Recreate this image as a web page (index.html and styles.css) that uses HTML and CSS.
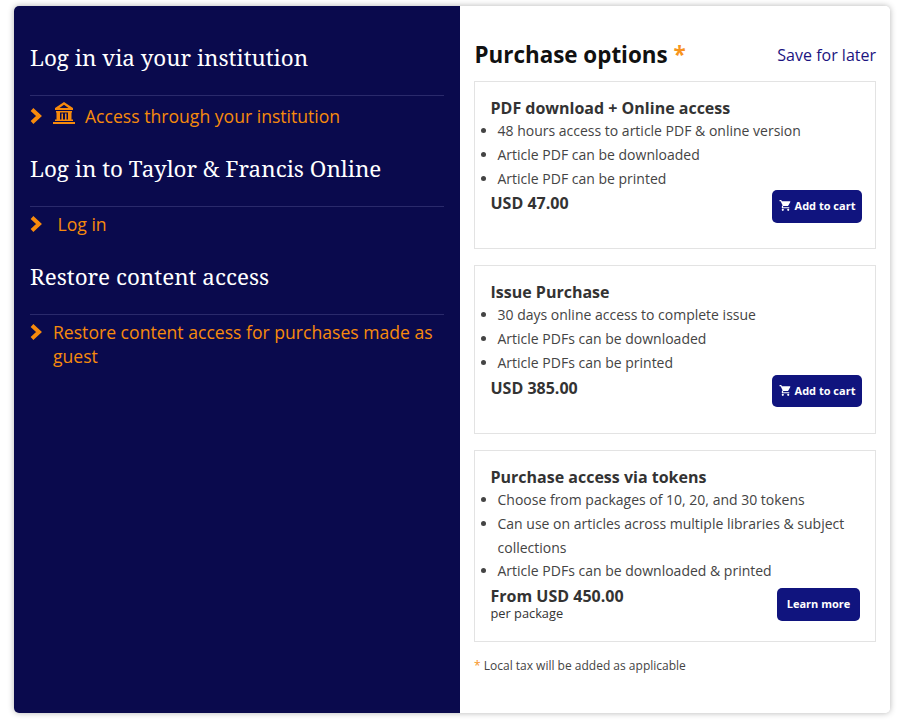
FILE: index.html
```html
<!DOCTYPE html>
<html lang="en">
<head>
<meta charset="utf-8">
<title>Purchase options</title>
<link rel="stylesheet" href="styles.css">
</head>
<body>
<main class="panel">
  <section class="login">
    <h2 class="login-title first">Log in via your institution</h2>
    <a class="login-row" href="#">
      <svg class="chev" viewBox="0 0 12 16"><path d="M2 1.500l7 6.500-7 6.500" fill="none" stroke="currentColor" stroke-width="4"/></svg>
      <svg class="bank" viewBox="0 0 22 22"><path fill="currentColor" fill-rule="evenodd" d="M11 0l9 6v2H2V6zM11 2.800L6.500 6h9zM0 20h22v2H0zM2 17.500h18V19H2zM3 9h16v1.500H3zM3.500 10.500h3.500v7H3.500zM8.500 11.500h1.500v6H8.500zM12 11.500h1.500v6H12zM15 10.500h3.500v7H15z"/></svg>
      <span class="row-text">Access through your institution</span>
    </a>
    <h2 class="login-title second">Log in to Taylor &amp; Francis Online</h2>
    <a class="login-row plain" href="#">
      <svg class="chev" viewBox="0 0 12 16"><path d="M2 1.500l7 6.500-7 6.500" fill="none" stroke="currentColor" stroke-width="4"/></svg>
      <span class="row-text login-text">Log in</span>
    </a>
    <h2 class="login-title restore">Restore content access</h2>
    <a class="login-row multi" href="#">
      <svg class="chev" viewBox="0 0 12 16"><path d="M2 1.500l7 6.500-7 6.500" fill="none" stroke="currentColor" stroke-width="4"/></svg>
      <span class="row-text">Restore content access for purchases made as guest</span>
    </a>
  </section>
  <section class="purchase">
    <header class="purchase-head">
      <h2 class="purchase-title">Purchase options <span class="star">*</span></h2>
      <a class="save" href="#">Save for later</a>
    </header>
    <article class="option opt-a">
      <h3 class="option-title">PDF download + Online access</h3>
      <ul class="features">
        <li>48 hours access to article PDF &amp; online version</li>
        <li>Article PDF can be downloaded</li>
        <li>Article PDF can be printed</li>
      </ul>
      <div class="buy">
        <div class="price">USD 47.00</div>
        <a class="btn cart" href="#"><svg class="cart-icon" viewBox="0 0 24 24"><path fill="currentColor" d="M7 18a2 2 0 1 0 0 4 2 2 0 0 0 0-4zM1 2v2h2l3.600 7.590-1.350 2.450A2 2 0 0 0 7 17h12v-2H7.420a.25.25 0 0 1-.25-.25l.03-.12.900-1.630h7.450c.75 0 1.410-.41 1.750-1.030l3.580-6.490A1 1 0 0 0 20 4H5.210l-.94-2zM17 18a2 2 0 1 0 0 4 2 2 0 0 0 0-4z"/></svg>Add to cart</a>
      </div>
    </article>
    <article class="option opt-b">
      <h3 class="option-title">Issue Purchase</h3>
      <ul class="features">
        <li>30 days online access to complete issue</li>
        <li>Article PDFs can be downloaded</li>
        <li>Article PDFs can be printed</li>
      </ul>
      <div class="buy">
        <div class="price">USD 385.00</div>
        <a class="btn cart" href="#"><svg class="cart-icon" viewBox="0 0 24 24"><path fill="currentColor" d="M7 18a2 2 0 1 0 0 4 2 2 0 0 0 0-4zM1 2v2h2l3.600 7.590-1.350 2.450A2 2 0 0 0 7 17h12v-2H7.420a.25.25 0 0 1-.25-.25l.03-.12.900-1.630h7.450c.75 0 1.410-.41 1.750-1.030l3.580-6.490A1 1 0 0 0 20 4H5.210l-.94-2zM17 18a2 2 0 1 0 0 4 2 2 0 0 0 0-4z"/></svg>Add to cart</a>
      </div>
    </article>
    <article class="option opt-c">
      <h3 class="option-title">Purchase access via tokens</h3>
      <ul class="features">
        <li>Choose from packages of 10, 20, and 30 tokens</li>
        <li>Can use on articles across multiple libraries &amp; subject collections</li>
        <li>Article PDFs can be downloaded &amp; printed</li>
      </ul>
      <div class="buy">
        <div class="price-block">
          <div class="price">From USD 450.00</div>
          <div class="per">per package</div>
        </div>
        <a class="btn more" href="#">Learn more</a>
      </div>
    </article>
    <p class="tax"><span class="star">*</span> Local tax will be added as applicable</p>
  </section>
</main>
</body>
</html>
```
FILE: styles.css
```css
* { box-sizing: border-box; }
html, body { margin: 0; background: #fff; }
body { padding: 6px 7px 9px 14px; font-family: "Open Sans", sans-serif; color: #333; }
a { text-decoration: none; }
.panel {
  display: flex;
  width: 876px;
  height: 707px;
  border-radius: 5px;
  overflow: hidden;
  box-shadow: 0 0 6px rgba(0,0,0,.3);
}
.login { width: 446px; background: #0a0a4d; padding: 0 16px; color: #fff; }
.login-title {
  margin: 0;
  font-family: "Noto Serif", "DejaVu Serif", serif;
  font-weight: 400;
  font-size: 22.4px;
  line-height: 30px;
  border-bottom: 1px solid #2a2a6b;
}
.login-title.first { height: 90px; padding-top: 37px; }
.login-title.second { height: 60px; padding-top: 7px; }
.login-title.restore { height: 57px; padding-top: 4px; }
.login-row {
  display: flex;
  align-items: flex-start;
  color: #f78a0c;
  font-size: 17.6px;
  line-height: 24px;
  padding-top: 8px;
  height: 51px;
}
.login-row.plain { padding-top: 5px; }
.login-row.multi { height: auto; padding-top: 5px; }
.chev { width: 12px; height: 16px; margin-top: 4px; flex: none; margin-right: 11px; }
.bank { width: 22px; height: 22px; flex: none; margin-right: 10px; margin-top: -2px; }
.login-text { margin-left: 4.500px; }
.purchase { flex: 1; background: #fff; padding: 0 14px; }
.purchase-head { display: flex; justify-content: space-between; align-items: center; height: 75px; padding-top: 22px; }
.purchase-title { margin: 0 0 0 0.500px; font-size: 22.4px; line-height: 30px; font-weight: 700; color: #111; }
.star { color: #f7941d; }
.save { color: #1b1480; font-size: 16px; margin-top: 1px; }
.option { border: 1px solid #e3e3e3; padding: 15px 13px 0 15.500px; margin-bottom: 16px; }
.opt-a { height: 168px; }
.opt-b { height: 169px; }
.opt-c { height: 192px; }
.option-title { margin: 0; font-size: 16px; line-height: 22px; font-weight: 700; color: #333; }
.features { margin: 0; padding: 0 0 0 7px; list-style: disc; font-size: 14px; line-height: 23.800px; color: #444; }
.buy { display: flex; justify-content: space-between; align-items: flex-start; }
.opt-a .buy, .opt-b .buy { margin-top: 1px; }
.price { font-size: 16px; line-height: 24px; font-weight: 700; }
.opt-b .price { margin-top: 1px; }
.per { font-size: 12.800px; line-height: 15px; }
.price-block { margin-top: 3.500px; }
.price-block .price { line-height: 19px; }
.btn { background: #10147e; color: #fff; border-radius: 5px; font-size: 11px; font-weight: 700; display: flex; align-items: center; justify-content: center; }
.cart { width: 90px; height: 33px; margin-top: -1px; padding-bottom: 2px; }
.opt-b .cart { margin-top: 0; height: 32px; padding-bottom: 1px; }
.cart-icon { width: 13px; height: 13px; margin-right: 3px; }
.more { width: 83px; height: 33px; margin-right: 2px; margin-top: 5px; padding-bottom: 2px; }
.tax { margin: 2px 0 0; font-size: 12px; line-height: 16px; color: #444; }
```
